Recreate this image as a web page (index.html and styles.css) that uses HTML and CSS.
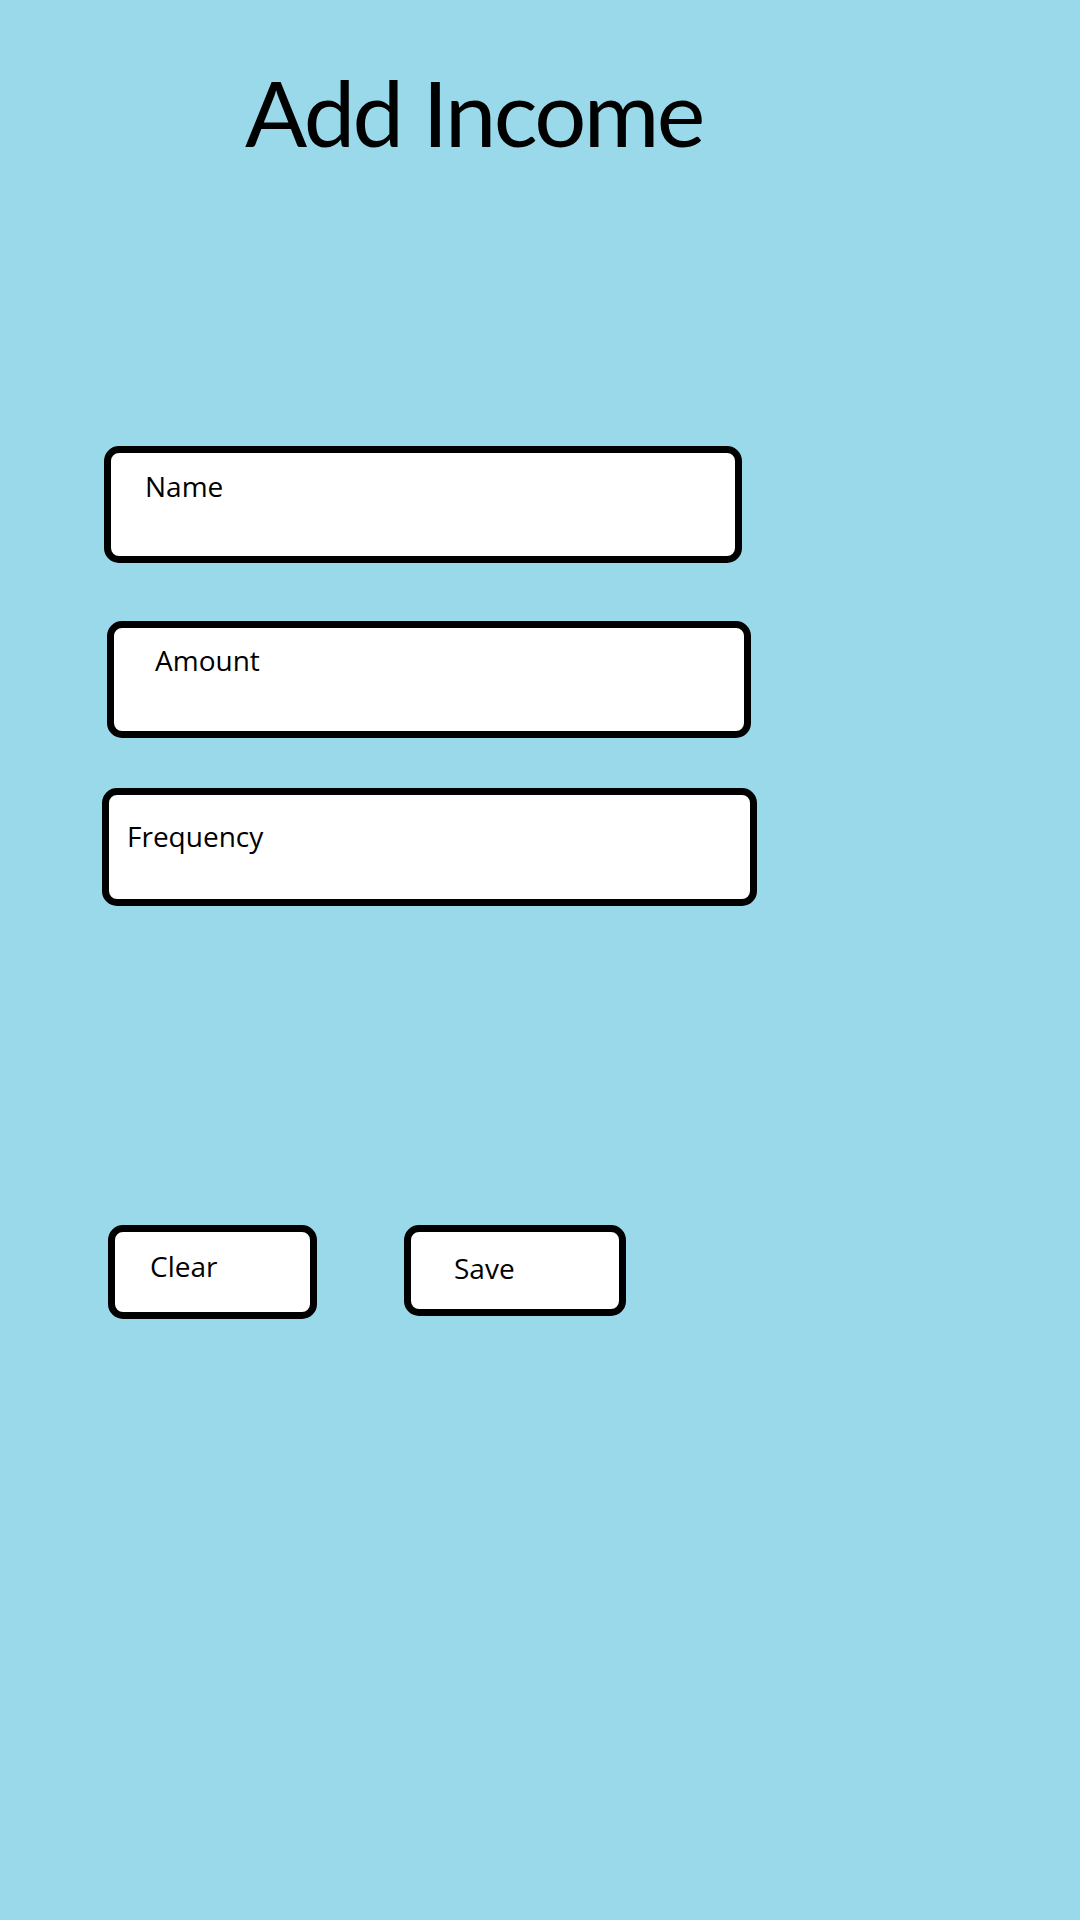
FILE: index.html
```html
<!DOCTYPE html>
<html lang="en">
<head>
<meta charset="utf-8">
<title>Add Income</title>
<link rel="stylesheet" href="styles.css">
</head>
<body>
<main class="page">
  <h1 class="title">Add Income</h1>
  <form class="form">
    <div class="field field-name"><span class="label">Name</span></div>
    <div class="field field-amount"><span class="label">Amount</span></div>
    <div class="field field-frequency"><span class="label">Frequency</span></div>
    <div class="actions">
      <button type="button" class="btn btn-clear">Clear</button>
      <button type="button" class="btn btn-save">Save</button>
    </div>
  </form>
</main>
</body>
</html>
```
FILE: styles.css
```css
html, body {
  margin: 0;
  padding: 0;
}
body {
  background: #99d9ea;
  width: 1080px;
  height: 1920px;
  font-family: "Open Sans", "DejaVu Sans", sans-serif;
  color: #000;
}
.page {
  padding-top: 66px;
}
.title {
  margin: 0 0 0 245px;
  font-family: Lato, "Open Sans", sans-serif;
  font-size: 92px;
  line-height: 1;
  font-weight: 400;
  letter-spacing: -2.6px;
}
.form {
  margin-top: 288px;
  display: flex;
  flex-direction: column;
  align-items: flex-start;
}
.field {
  box-sizing: border-box;
  background: #fff;
  border: 7px solid #000;
  border-radius: 15px;
  height: 117px;
}
.label, .btn {
  font-size: 28px;
  line-height: 1;
  display: block;
}
.field-name {
  margin-left: 104px;
  width: 638px;
  padding: 19px 0 0 34px;
}
.field-amount {
  margin-top: 58px;
  margin-left: 107px;
  width: 644px;
  padding: 18px 0 0 41px;
}
.field-frequency {
  margin-top: 50px;
  margin-left: 102px;
  width: 655px;
  height: 118px;
  padding: 27px 0 0 18px;
}
.actions {
  margin-top: 319px;
  display: flex;
  align-items: flex-start;
  gap: 87px;
  margin-left: 108px;
}
.btn {
  box-sizing: border-box;
  background: #fff;
  border: 7px solid #000;
  border-radius: 15px;
  font-family: "Open Sans", "DejaVu Sans", sans-serif;
  color: #000;
  text-align: left;
  margin: 0;
  display: flex;
  align-items: flex-start;
}
.btn-clear {
  width: 209px;
  height: 94px;
  padding: 20px 0 0 35px;
}
.btn-save {
  width: 222px;
  height: 91px;
  padding: 22px 0 0 43px;
}
```
